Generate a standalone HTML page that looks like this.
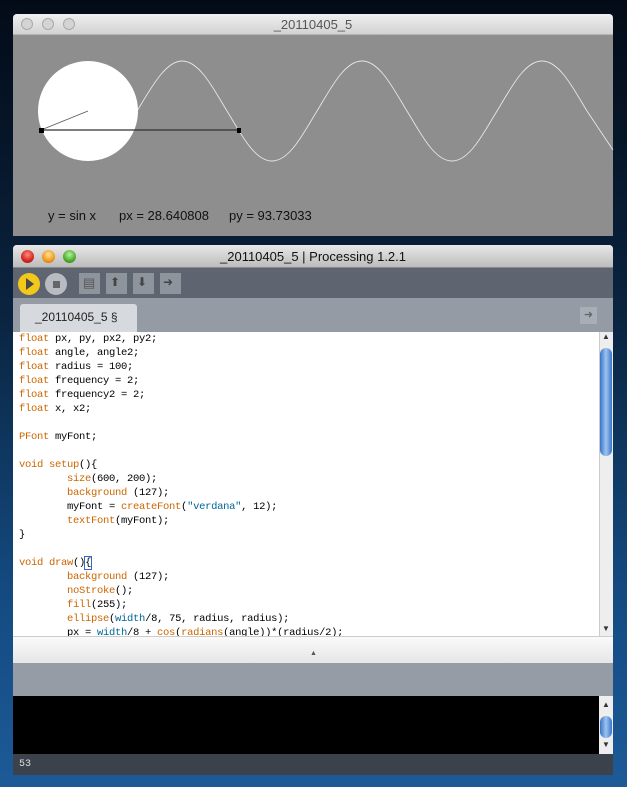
<!DOCTYPE html>
<html><head><style>
*{margin:0;padding:0;box-sizing:border-box}
body{width:627px;height:787px;overflow:hidden;position:relative;background:linear-gradient(180deg,#030b17 0%,#0a2440 40%,#144a80 75%,#1c5a98 100%);font-family:"Liberation Sans",sans-serif}
.abs{position:absolute}
.code{position:absolute;left:19px;top:332px;font:10.5px/14px "Liberation Mono",monospace;letter-spacing:-0.3px;color:#000;white-space:pre}
.k{color:#cc6600}.b{color:#006699}
.btn{position:absolute;top:273px;width:21px;height:21px;background:#8e949c}
.t{position:absolute;top:208px;font-size:13px;color:#111;white-space:pre}
</style></head><body>
<!-- window 1 -->
<div class="abs" style="left:13px;top:14px;width:600px;height:222px;background:#8e8e8e;border-radius:4px 4px 0 0;overflow:hidden">
<div style="height:21px;background:linear-gradient(#f0f0f0,#d2d2d2);border-bottom:1px solid #b5b5b5;text-align:center;font-size:13px;line-height:21px;color:#555">_20110405_5</div>
</div>
<div class="abs" style="left:21px;top:18px;width:12px;height:12px;border-radius:50%;background:#d4d4d4;border:1px solid #a9a9a9"></div>
<div class="abs" style="left:42px;top:18px;width:12px;height:12px;border-radius:50%;background:#d4d4d4;border:1px solid #a9a9a9"></div>
<div class="abs" style="left:63px;top:18px;width:12px;height:12px;border-radius:50%;background:#d4d4d4;border:1px solid #a9a9a9"></div>
<svg class="abs" style="left:0;top:0" width="627" height="240">
<path d="M137 111 C 150 90,165 61,182 61 C 200 61,214 90,227 111 C 240 132,254 161,272 161 C 290 161,304 132,317 111 C 330 90,344 61,362 61 C 380 61,394 90,407 111 C 420 132,434 161,452 161 C 470 161,484 132,497 111 C 510 90,524 61,542 61 C 560 61,574 90,587 111 L 613 150" fill="none" stroke="#e6e6e6" stroke-width="0.9"/>
<ellipse cx="88" cy="111" rx="50" ry="50" fill="#fff"/>
<line x1="41" y1="130" x2="239" y2="130" stroke="#333" stroke-width="1.2"/>
<line x1="41" y1="130" x2="88" y2="111" stroke="#555" stroke-width="0.8"/>
<rect x="39" y="128" width="5" height="5" fill="#000"/>
<rect x="237" y="128" width="4" height="5" fill="#000"/>
</svg>
<div class="t" style="left:48px">y = sin x</div>
<div class="t" style="left:119px">px = 28.640808</div>
<div class="t" style="left:229px">py = 93.73033</div>
<!-- window 2 -->
<div class="abs" style="left:13px;top:245px;width:600px;height:530px;background:#fff;border-radius:4px 4px 0 0;overflow:hidden">
<div style="height:23px;background:linear-gradient(#e8e8e8,#bcbcbc);border-bottom:1px solid #8a8a8a;text-align:center;font-size:13px;line-height:23px;color:#111">_20110405_5 | Processing 1.2.1</div>
<div style="height:30px;background:#5e6570"></div>
<div style="height:34px;background:#949ba4;position:relative"><div style="position:absolute;left:7px;top:6px;width:117px;height:28px;background:#d6dadf;border-radius:3px 3px 0 0;font-size:12px;line-height:26px;color:#222;padding-left:15px">_20110405_5 §</div>
<div style="position:absolute;left:567px;top:9px;width:17px;height:17px;background:#a8aeb6;color:#666;font-size:11px;text-align:center;line-height:17px">➜</div></div>
</div>
<div class="abs" style="left:21px;top:250px;width:13px;height:13px;border-radius:50%;background:radial-gradient(circle at 50% 35%,#ff8a80,#d3261c 60%,#8a1010);"></div>
<div class="abs" style="left:42px;top:250px;width:13px;height:13px;border-radius:50%;background:radial-gradient(circle at 50% 35%,#ffe09a,#f29a1c 60%,#a45a08);"></div>
<div class="abs" style="left:63px;top:250px;width:13px;height:13px;border-radius:50%;background:radial-gradient(circle at 50% 35%,#b8f0a0,#4cae2c 60%,#2a6a10);"></div>
<div class="btn" style="left:18px;border-radius:50%;background:#f2c81a;width:22px;height:22px"></div>
<div class="abs" style="left:26px;top:278px;border-left:8px solid #4a4a4a;border-top:6px solid transparent;border-bottom:6px solid transparent"></div>
<div class="btn" style="left:45px;border-radius:50%;background:#b8bcc2;width:22px;height:22px"></div>
<div class="abs" style="left:53px;top:281px;width:7px;height:7px;background:#666"></div>
<div class="btn" style="left:79px"></div><div class="btn" style="left:106px"></div><div class="btn" style="left:133px"></div><div class="btn" style="left:160px"></div>
<div class="abs" style="left:83px;top:275px;font-size:13px;color:#555">▤</div>
<div class="abs" style="left:110px;top:275px;font-size:12px;color:#444">⬆</div>
<div class="abs" style="left:137px;top:275px;font-size:12px;color:#444">⬇</div>
<div class="abs" style="left:163px;top:275px;font-size:12px;color:#444">➜</div>
<div class="code"><span class="k">float</span> px, py, px2, py2;
<span class="k">float</span> angle, angle2;
<span class="k">float</span> radius = 100;
<span class="k">float</span> frequency = 2;
<span class="k">float</span> frequency2 = 2;
<span class="k">float</span> x, x2;

<span class="k">PFont</span> myFont;

<span class="k">void</span> <span class="k">setup</span>(){
        <span class="k">size</span>(600, 200);
        <span class="k">background</span> (127);
        myFont = <span class="k">createFont</span>(<span class="b">"verdana"</span>, 12);
        <span class="k">textFont</span>(myFont);
}

<span class="k">void</span> <span class="k">draw</span>()<span style="outline:1px solid #36c">{</span>
        <span class="k">background</span> (127);
        <span class="k">noStroke</span>();
        <span class="k">fill</span>(255);
        <span class="k">ellipse</span>(<span class="b">width</span>/8, 75, radius, radius);
        px = <span class="b">width</span>/8 + <span class="k">cos</span>(<span class="k">radians</span>(angle))*(radius/2);</div>
<!-- scrollbar -->
<div class="abs" style="left:599px;top:332px;width:14px;height:304px;background:#eee;border-left:1px solid #ccc"></div>
<div class="abs" style="left:600px;top:348px;width:12px;height:108px;border-radius:6px;background:linear-gradient(90deg,#3a74c8,#9cc4f0,#3a74c8)"></div>
<div class="abs" style="left:600px;top:332px;font-size:8px;color:#333;width:12px;text-align:center">▲</div>
<div class="abs" style="left:600px;top:624px;font-size:8px;color:#333;width:12px;text-align:center">▼</div>
<div class="abs" style="left:13px;top:636px;width:600px;height:27px;background:linear-gradient(#fafafa,#e6e6e6);border-top:1px solid #ccc"></div>
<div class="abs" style="left:310px;top:650px;font-size:7px;color:#555">▲</div>
<div class="abs" style="left:13px;top:663px;width:600px;height:33px;background:#959ca5"></div>
<div class="abs" style="left:13px;top:696px;width:587px;height:58px;background:#000"></div>
<div class="abs" style="left:599px;top:696px;width:14px;height:58px;background:#eee"></div>
<div class="abs" style="left:600px;top:700px;font-size:8px;color:#333;width:12px;text-align:center">▲</div>
<div class="abs" style="left:600px;top:716px;width:12px;height:22px;border-radius:6px;background:linear-gradient(90deg,#3a74c8,#9cc4f0,#3a74c8)"></div>
<div class="abs" style="left:600px;top:740px;font-size:8px;color:#333;width:12px;text-align:center">▼</div>
<div class="abs" style="left:13px;top:754px;width:600px;height:21px;background:#3b424c;color:#ddd;font:10px/22px 'Liberation Mono',monospace;padding-left:6px">53</div>
</body></html>
